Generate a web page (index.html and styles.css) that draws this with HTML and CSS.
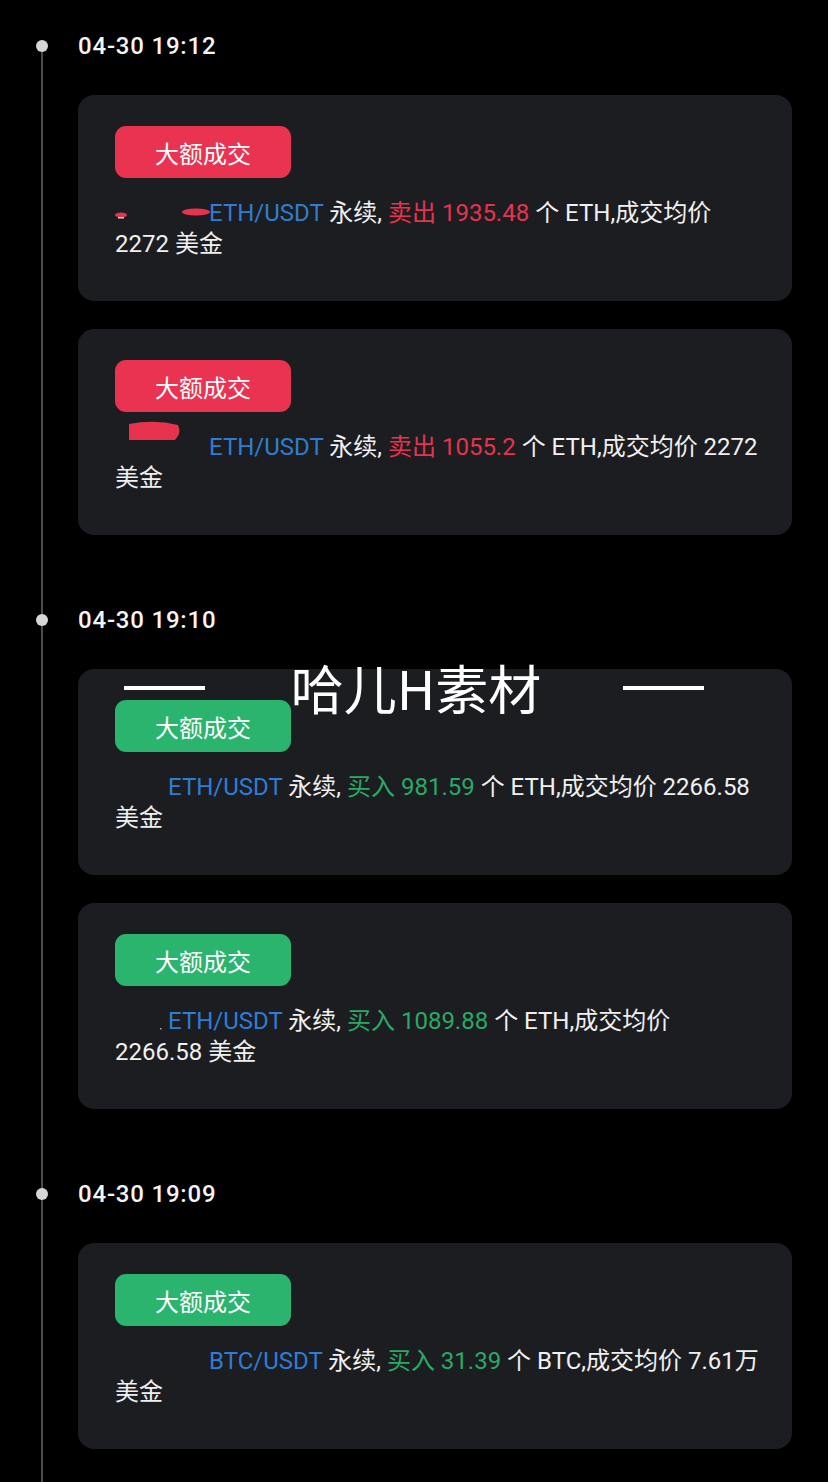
FILE: index.html
```html
<!DOCTYPE html>
<html lang="zh">
<head>
<meta charset="utf-8">
<link rel="stylesheet" href="styles.css">
</head>
<body>
<div class="page">
  <section class="group">
    <div class="stamp"><span class="dot"></span><span class="time">04-30 19:12</span></div>
    <div class="card">
      <div class="badge sell">大额成交</div>
      <p class="msg"><span class="mask w94"><svg width="94" height="20" viewBox="0 0 94 20"><ellipse cx="6" cy="11" rx="6" ry="2.5" fill="#e8334f"/><rect x="3" y="13" width="6" height="1.5" fill="#ddd"/><ellipse cx="81" cy="8" rx="14" ry="3.5" fill="#e8334f"/></svg></span><span class="pair">ETH/USDT</span> 永续, <span class="red">卖出 1935.48</span> 个 ETH,成交均价<br>2272 美金</p>
    </div>
    <div class="card">
      <div class="badge sell">大额成交</div>
      <p class="msg"><span class="mask w94"><svg width="94" height="20" viewBox="0 0 94 20"><path d="M14 -14 Q40 -19 63 -13 Q67 -5 60 2 L14 2 Z" fill="#e8334f"/></svg></span><span class="pair">ETH/USDT</span> 永续, <span class="red">卖出 1055.2</span> 个 ETH,成交均价 2272<br>美金</p>
    </div>
  </section>

  <section class="group">
    <div class="stamp"><span class="dot"></span><span class="time">04-30 19:10</span></div>
    <div class="card">
      <div class="badge buy">大额成交</div>
      <p class="msg"><span class="mask w53"></span><span class="pair">ETH/USDT</span> 永续, <span class="green">买入 981.59</span> 个 ETH,成交均价 2266.58<br>美金</p>
    </div>
    <div class="card">
      <div class="badge buy">大额成交</div>
      <p class="msg"><span class="mask w53"><svg width="53" height="20" viewBox="0 0 53 20"><rect x="45" y="16" width="1.5" height="1.5" fill="#aaa"/></svg></span><span class="pair">ETH/USDT</span> 永续, <span class="green">买入 1089.88</span> 个 ETH,成交均价<br>2266.58 美金</p>
    </div>
  </section>

  <section class="group">
    <div class="stamp"><span class="dot"></span><span class="time">04-30 19:09</span></div>
    <div class="card">
      <div class="badge buy">大额成交</div>
      <p class="msg"><span class="mask w94"></span><span class="pair">BTC/USDT</span> 永续, <span class="green">买入 31.39</span> 个 BTC,成交均价 7.61万<br>美金</p>
    </div>
  </section>

  <div class="watermark"><span class="dash"></span><span class="wm-text">哈儿H素材</span><span class="dash"></span></div>
</div>
</body>
</html>
```

FILE: styles.css
```css
html, body {
  margin: 0;
  padding: 0;
  background: #000;
}
body {
  width: 828px;
  height: 1482px;
  overflow: hidden;
  font-family: Roboto, "Noto Sans CJK SC", sans-serif;
  color: #f1f1f1;
}
.page {
  position: relative;
  box-sizing: border-box;
  height: 1482px;
  padding: 31px 36px 0 78px;
  background-image: linear-gradient(#4b4b4b, #4b4b4b);
  background-repeat: no-repeat;
  background-position: 41px 46px;
  background-size: 2px 1482px;
  display: flex;
  flex-direction: column;
  gap: 70px;
}
.group {
  display: flex;
  flex-direction: column;
  gap: 28px;
}
.stamp {
  display: flex;
  align-items: center;
  gap: 30px;
  margin-left: -42px;
  height: 30px;
  margin-bottom: 6px;
}
.dot {
  width: 12px;
  height: 12px;
  border-radius: 50%;
  background: #d6d6d6;
  flex: none;
}
.time {
  font-size: 24px;
  font-weight: 500;
  line-height: 30px;
  color: #f4f4f4;
  letter-spacing: 0.8px;
}
.card {
  background: #1c1d21;
  border-radius: 16px;
  padding: 31px 30px 41px 37px;
  height: 206px;
  box-sizing: border-box;
}
.badge {
  width: 176px;
  height: 52px;
  border-radius: 11px;
  display: flex;
  align-items: center;
  justify-content: center;
  font-family: "Noto Sans CJK SC", sans-serif;
  font-size: 24px;
  color: #fff;
  margin-bottom: 20px;
}
.badge.sell { background: #ea3350; }
.badge.buy { background: #2bb46d; }
.msg {
  margin: 0;
  font-size: 24px;
  line-height: 31px;
  white-space: nowrap;
  color: #f0f0f0;
}
.mask {
  display: inline-block;
  height: 20px;
  vertical-align: -3px;
}
.mask svg { display: block; overflow: visible; }
.w94 { width: 94px; }
.w53 { width: 53px; }
.pair { color: #2f7dd3; }
.red { color: #e5344f; }
.green { color: #2aa967; }
.watermark {
  position: absolute;
  left: 124px;
  top: 657px;
  width: 580px;
  display: flex;
  align-items: center;
  justify-content: space-between;
}
.dash {
  width: 81px;
  height: 4px;
  background: #fff;
  margin-top: 2px;
}
.wm-text {
  font-family: "Noto Sans CJK SC", sans-serif;
  font-size: 53px;
  font-weight: 400;
  line-height: 60px;
  color: #fff;
  margin-left: 4px;
  margin-right: 0;
}
```
